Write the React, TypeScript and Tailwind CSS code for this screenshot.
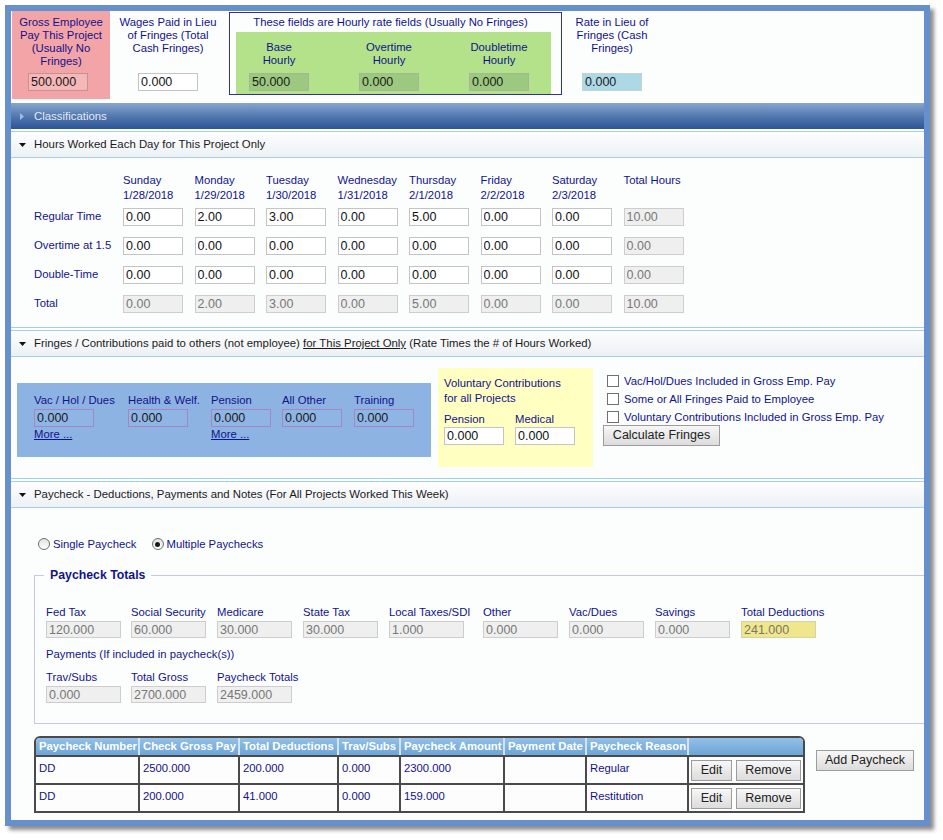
import React from "react";

const NAVY = "text-[#12128a]";
const FONT = { fontFamily: '"Liberation Sans", Arial, sans-serif' };

const inpBase =
  "block h-[18px] border px-[2px] text-[12.5px] leading-[16px] outline-none";
const inpWhite = inpBase + " w-[60px] bg-white border-[#c4c4c4] text-[#111]";
const inpGray = inpBase + " w-[60px] bg-[#efefef] border-[#cdcdcd] text-[#777]";
const inpGray75 = "block h-[17px] w-[75px] border px-[2px] text-[12.5px] leading-[15px] outline-none bg-[#efefef] border-[#cdcdcd] text-[#777]";
const inpKhaki75 = "block h-[17px] w-[75px] border px-[2px] text-[12.5px] leading-[15px] outline-none bg-[#f0e68c] border-[#d6d2a8] text-[#77776a]";

const btn =
  "h-[21px] border border-[#9c9c9c] bg-linear-to-b from-[#f7f7f7] to-[#dcdcdc] text-[12.5px] text-[#222] leading-[19px]";

function Tri() {
  return (
    <svg className="ml-[8px] mr-[8px] shrink-0" width="7" height="4" viewBox="0 0 7 4">
      <path d="M0 0h7L3.5 4z" fill="#111" />
    </svg>
  );
}

function SectionHeader({ children }: { children: React.ReactNode }) {
  return (
    <div className="mt-[2px] flex h-[27px] items-center border-y border-[#a5cdec] bg-linear-to-b from-[#fdfefe] to-[#edf1f4] text-[11.4px] text-[#1a1a1a]">
      <Tri />
      <span>{children}</span>
    </div>
  );
}

const days = [
  ["Sunday", "1/28/2018"],
  ["Monday", "1/29/2018"],
  ["Tuesday", "1/30/2018"],
  ["Wednesday", "1/31/2018"],
  ["Thursday", "2/1/2018"],
  ["Friday", "2/2/2018"],
  ["Saturday", "2/3/2018"],
];

const zeros = ["0.00", "0.00", "0.00", "0.00", "0.00", "0.00", "0.00"];
const hourRows = [
  { label: "Regular Time", vals: ["0.00", "2.00", "3.00", "0.00", "5.00", "0.00", "0.00"], total: "10.00", ro: false },
  { label: "Overtime at 1.5", vals: zeros, total: "0.00", ro: false },
  { label: "Double-Time", vals: zeros, total: "0.00", ro: false },
  { label: "Total", vals: ["0.00", "2.00", "3.00", "0.00", "5.00", "0.00", "0.00"], total: "10.00", ro: true },
];

function Radio({ checked }: { checked?: boolean }) {
  return (
    <span className="flex h-[12px] w-[12px] items-center justify-center rounded-full border border-[#6e6e6e] bg-linear-to-b from-[#e2e2e2] to-[#ffffff]">
      {checked ? <span className="h-[5px] w-[5px] rounded-full bg-[#1a1a1a]" /> : null}
    </span>
  );
}

function Check({ label }: { label: string }) {
  return (
    <div className="flex h-[18px] items-center pl-[4px]">
      <span className="h-[12px] w-[12px] border border-[#707070] bg-white" />
      <span className={`ml-[5px] ${NAVY}`}>{label}</span>
    </div>
  );
}

const dedCols = [
  { l: "Fed Tax", v: "120.000", w: "w-[85px]" },
  { l: "Social Security", v: "60.000", w: "w-[86px]" },
  { l: "Medicare", v: "30.000", w: "w-[86px]" },
  { l: "State Tax", v: "30.000", w: "w-[86px]" },
  { l: "Local Taxes/SDI", v: "1.000", w: "w-[94px]" },
  { l: "Other", v: "0.000", w: "w-[86px]" },
  { l: "Vac/Dues", v: "0.000", w: "w-[86px]" },
  { l: "Savings", v: "0.000", w: "w-[86px]" },
];

const tableCols = ["w-[104px]", "w-[100px]", "w-[99px]", "w-[62px]", "w-[104px]", "w-[82px]", "w-[102px]", "w-[114px]"];
const tableHead = ["Paycheck Number", "Check Gross Pay", "Total Deductions", "Trav/Subs", "Paycheck Amount", "Payment Date", "Paycheck Reason", ""];
const tableRows = [
  ["DD", "2500.000", "200.000", "0.000", "2300.000", "", "Regular"],
  ["DD", "200.000", "41.000", "0.000", "159.000", "", "Restitution"],
];

export default function App() {
  return (
    <div className="min-h-[840px] bg-white pl-[5px] pt-[5px] text-[11.3px] leading-[13px]" style={FONT}>
      <div className="flex h-[821px] w-[925px] flex-col border-[6px] border-[#6690cc] bg-[#fcfefe] shadow-[4px_4px_4px_rgba(0,0,0,0.45)]">
        {/* Top rates row */}
        <div className={`flex h-[92px] items-start ${NAVY}`}>
          <div className="ml-[1px] flex h-[88px] w-[98px] flex-col items-center bg-[#f2a4a7] pt-[5px] text-center">
            <div>
              Gross Employee
              <br />
              Pay This Project
              <br />
              (Usually No
              <br />
              Fringes)
            </div>
            <input
              readOnly
              value="500.000"
              className={inpBase + " mb-[8px] ml-[16px] mt-auto w-[60px] self-start border-[#c09494] bg-[#f5b7b7] text-[#1a1a1a]"}
            />
          </div>
          <div className="flex h-[88px] w-[116px] flex-col items-center pt-[5px] text-center">
            <div>
              Wages Paid in Lieu
              <br />
              of Fringes (Total
              <br />
              Cash Fringes)
            </div>
            <input readOnly value="0.000" className={inpWhite + " mb-[8px] mt-auto"} />
          </div>
          <div className="ml-[3px] mt-[1px] flex h-[83px] w-[333px] flex-col border border-[#30309a]">
            <div className="pr-[10px] pt-[3px] text-center">These fields are Hourly rate fields (Usually No Fringes)</div>
            <div className="ml-[6px] mr-[10px] mt-[3px] flex flex-1 gap-[50px] bg-[#b3e28b] pl-[13px]">
              {[
                ["Base", "50.000"],
                ["Overtime", "0.000"],
                ["Doubletime", "0.000"],
              ].map(([n, v]) => (
                <div key={n} className="flex w-[60px] flex-col items-center pt-[9px] text-center">
                  <div className="whitespace-nowrap">
                    {n}
                    <br />
                    Hourly
                  </div>
                  <input
                    readOnly
                    value={v}
                    className={inpBase + " mb-[3px] mt-auto w-[60px] border-[#a6b59a] bg-[#9cc87f] text-[#1a1a1a]"}
                  />
                </div>
              ))}
            </div>
          </div>
          <div className="flex h-[88px] w-[100px] flex-col items-center pt-[5px] text-center">
            <div>
              Rate in Lieu of
              <br />
              Fringes (Cash
              <br />
              Fringes)
            </div>
            <input
              readOnly
              value="0.000"
              className={inpBase + " mb-[8px] mt-auto w-[60px] border-[#c4d2d8] bg-[#add8e6] text-[#1a1a1a]"}
            />
          </div>
        </div>

        {/* Classifications bar */}
        <div className="flex h-[26px] items-center bg-linear-to-b from-[#88a6cf] via-[#5478b0] to-[#2b5595] text-[11.4px] text-[#e3eaf4]">
          <svg className="ml-[9px] mr-[10px]" width="4" height="7" viewBox="0 0 4 7">
            <path d="M0 0L4 3.5L0 7z" fill="#9fbde2" />
          </svg>
          <span>Classifications</span>
        </div>

        {/* Hours */}
        <SectionHeader>Hours Worked Each Day for This Project Only</SectionHeader>
        <div className={`h-[170px] border-b border-[#a5cdec] pl-[23px] pt-[15px] ${NAVY}`}>
          <div className="flex leading-[15px]">
            <div className="w-[89px]" />
            {days.map(([d, dt]) => (
              <div key={d} className="w-[71.5px]">
                {d}
                <br />
                {dt}
              </div>
            ))}
            <div className="w-[71.5px]">Total Hours</div>
          </div>
          <div className="mt-[5px] flex flex-col gap-[11px]">
            {hourRows.map((r) => (
              <div key={r.label} className="flex h-[18px] items-center">
                <div className="w-[89px] pb-[2px]">{r.label}</div>
                {r.vals.map((v, i) => (
                  <div key={i} className="w-[71.5px]">
                    <input readOnly value={v} className={r.ro ? inpGray : inpWhite} />
                  </div>
                ))}
                <div className="w-[71.5px]">
                  <input readOnly value={r.total} className={inpGray} />
                </div>
              </div>
            ))}
          </div>
        </div>

        {/* Fringes */}
        <SectionHeader>
          Fringes / Contributions paid to others (not employee){" "}
          <span className="underline">for This Project Only</span> (Rate Times the # of Hours Worked)
        </SectionHeader>
        <div className={`flex h-[122px] items-start border-b border-[#a5cdec] ${NAVY}`}>
          <div className="ml-[6px] mt-[26px] flex h-[74px] w-[414px] bg-[#8db3e3] pl-[17px] pt-[11px]">
            {[
              { l: "Vac / Hol / Dues", w: "w-[94px]", more: true },
              { l: "Health & Welf.", w: "w-[83px]", more: false },
              { l: "Pension", w: "w-[71px]", more: true },
              { l: "All Other", w: "w-[72px]", more: false },
              { l: "Training", w: "w-[60px]", more: false },
            ].map((c) => (
              <div key={c.l} className={c.w}>
                <div className="whitespace-nowrap">{c.l}</div>
                <input
                  readOnly
                  value="0.000"
                  className={inpBase + " mt-[2px] h-[17px] w-[60px] border-[#a784c6] bg-[#8fb5e4] text-[#1a1a1a]"}
                />
                {c.more ? <div className="mt-[1px] underline">More ...</div> : null}
              </div>
            ))}
          </div>
          <div className="ml-[7px] mt-[11px] h-[99px] w-[155px] bg-[#ffffc2] pl-[6px] pt-[8px]">
            <div className="leading-[15px]">
              Voluntary Contributions
              <br />
              for all Projects
            </div>
            <div className="mt-[7px] flex">
              <div className="w-[71px]">
                <div>Pension</div>
                <input readOnly value="0.000" className={inpWhite + " mt-[1px] h-[17px]"} />
              </div>
              <div className="w-[71px]">
                <div>Medical</div>
                <input readOnly value="0.000" className={inpWhite + " mt-[1px] h-[17px]"} />
              </div>
            </div>
          </div>
          <div className="ml-[10px] mt-[15px] flex flex-col">
            <Check label="Vac/Hol/Dues Included in Gross Emp. Pay" />
            <Check label="Some or All Fringes Paid to Employee" />
            <Check label="Voluntary Contributions Included in Gross Emp. Pay" />
            <button className={btn + " mt-[-1px] w-[117px]"}>Calculate Fringes</button>
          </div>
        </div>

        {/* Paycheck */}
        <SectionHeader>Paycheck - Deductions, Payments and Notes (For All Projects Worked This Week)</SectionHeader>
        <div className={`flex-1 pt-[29px] ${NAVY}`}>
          <div className="flex h-[14px] items-center pl-[27px]">
            <Radio />
            <span className="ml-[3px]">Single Paycheck</span>
            <span className="ml-[15px]">
              <Radio checked />
            </span>
            <span className="ml-[3px]">Multiple Paychecks</span>
          </div>

          <fieldset className="ml-[23px] mt-[17px] border border-r-0 border-[#c6cae0] pb-[20px] pl-[11px] pt-[23px]">
            <legend className="ml-[-2px] px-[6px] text-[12.3px] font-bold leading-[15px]">Paycheck Totals</legend>
            <div className="flex">
              {dedCols.map((c) => (
                <div key={c.l} className={c.w}>
                  <div className="whitespace-nowrap">{c.l}</div>
                  <input readOnly value={c.v} className={inpGray75 + " mt-[2px]"} />
                </div>
              ))}
              <div>
                <div className="whitespace-nowrap">Total Deductions</div>
                <input readOnly value="241.000" className={inpKhaki75 + " mt-[2px]"} />
              </div>
            </div>
            <div className="mt-[10px]">Payments (If included in paycheck(s))</div>
            <div className="mt-[10px] flex">
              {[
                ["Trav/Subs", "0.000", "w-[85px]"],
                ["Total Gross", "2700.000", "w-[86px]"],
                ["Paycheck Totals", "2459.000", "w-[86px]"],
              ].map(([l, v, w]) => (
                <div key={l} className={w}>
                  <div className="whitespace-nowrap">{l}</div>
                  <input readOnly value={v} className={inpGray75 + " mt-[2px]"} />
                </div>
              ))}
            </div>
          </fieldset>

          <div className="ml-[23px] mt-[12px] flex items-start">
            <div className="overflow-hidden rounded-t-[6px] border-2 border-[#4a4a4a] bg-[#fdfdfd]">
              <div className="flex border-b-2 border-[#4a4a4a] bg-linear-to-b from-[#93c0e7] to-[#6ca5d8]">
                {tableHead.map((h, i) => (
                  <div
                    key={i}
                    className={`${tableCols[i]} h-[17px] whitespace-nowrap px-[3px] text-[11.3px] font-bold leading-[17px] text-white ${
                      i < 7 ? "border-r-2 border-[#d2e4f3]" : ""
                    }`}
                  >
                    {h}
                  </div>
                ))}
              </div>
              {tableRows.map((r, ri) => (
                <div key={ri} className={`flex ${ri === 0 ? "border-b-2 border-[#4a4a4a]" : ""}`}>
                  {r.map((c, ci) => (
                    <div
                      key={ci}
                      className={`${tableCols[ci]} h-[26px] border-r-2 border-[#4a4a4a] pl-[3px] pt-[4px] leading-[14px]`}
                    >
                      {c}
                    </div>
                  ))}
                  <div className={`${tableCols[7]} flex h-[26px] gap-[4px] pl-[2px] pt-[3px]`}>
                    <button className={btn + " w-[41px]"}>Edit</button>
                    <button className={btn + " w-[65px]"}>Remove</button>
                  </div>
                </div>
              ))}
            </div>
            <button className={btn + " ml-[11px] mt-[14px] w-[98px]"}>Add Paycheck</button>
          </div>
        </div>
      </div>
    </div>
  );
}
